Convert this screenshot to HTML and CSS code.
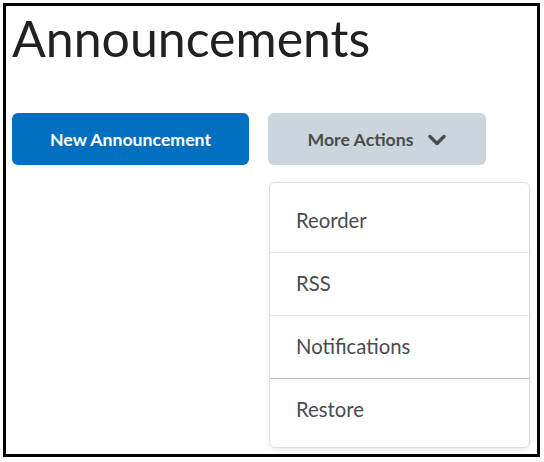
FILE: index.html
```html
<!DOCTYPE html>
<html lang="en">
<head>
  <meta charset="UTF-8">
  <title>Announcements</title>
  <link rel="stylesheet" href="styles.css">
</head>
<body>
  <div class="frame">
    <h1 class="page-title">Announcements</h1>

    <div class="toolbar">
      <button class="btn btn-primary" type="button">New Announcement</button>

      <div class="dropdown">
        <button class="btn btn-secondary" type="button">
          More Actions
          <svg class="chevron" width="18" height="12" viewBox="0 0 18 12" aria-hidden="true">
            <polyline points="2,2.5 9,9.5 16,2.5" fill="none" stroke="#494c4e" stroke-width="3.4" stroke-linecap="round" stroke-linejoin="round"/>
          </svg>
        </button>

        <!-- открытое меню -->
        <ul class="menu">
          <li class="menu-item">Reorder</li>
          <li class="menu-item">RSS</li>
          <li class="menu-item">Notifications</li>
          <li class="menu-item menu-item-sep">Restore</li>
        </ul>
      </div>
    </div>
  </div>
</body>
</html>
```

FILE: styles.css
```css
body {
  margin: 0;
  padding: 3px;
  font-family: 'Lato', 'Liberation Sans', sans-serif;
  background: #fff;
  color: #494c4e;
}

.frame {
  width: 525px;
  height: 448px;
  border: 3px solid #000;
  padding: 0 0 0 6px;
}

.page-title {
  margin: 0;
  padding-top: 2px;
  font-size: 50px;
  font-weight: 400;
  line-height: 61px;
  color: #202122;
}

.toolbar {
  display: flex;
  gap: 19px;
  margin-top: 44px;
}

.btn {
  height: 52px;
  border: none;
  border-radius: 6px;
  font-family: inherit;
  font-size: 17.7px;
  font-weight: 700;
  cursor: pointer;
  display: flex;
  align-items: center;
  justify-content: center;
}

.btn-primary {
  width: 237px;
  background: #006fbf;
  color: #fff;
}

.btn-secondary {
  width: 218px;
  background: #cdd5dc;
  color: #494c4e;
  gap: 15px;
  padding-left: 6px;
}

.chevron {
  display: block;
  margin-top: 1px;
}

.dropdown {
  position: relative;
}

.menu {
  position: absolute;
  top: 69px;
  left: 1px;
  width: 261px;
  box-sizing: border-box;
  margin: 0;
  padding: 7px 0 6px;
  list-style: none;
  background: #fff;
  border: 1px solid #d8dee6;
  border-radius: 6px;
  box-shadow: 0 2px 6px rgba(0, 0, 0, 0.08);
}

.menu-item {
  height: 62px;
  padding-left: 26px;
  padding-bottom: 2px;
  box-sizing: border-box;
  height: 63px;
  display: flex;
  align-items: center;
  font-size: 20.3px;
  color: #494c4e;
  border-top: 1px solid #e3e9f1;
}

.menu-item:first-child {
  border-top: none;
  height: 62px;
}

.menu-item-sep {
  border-top-color: #b9c2cb;
}
```
